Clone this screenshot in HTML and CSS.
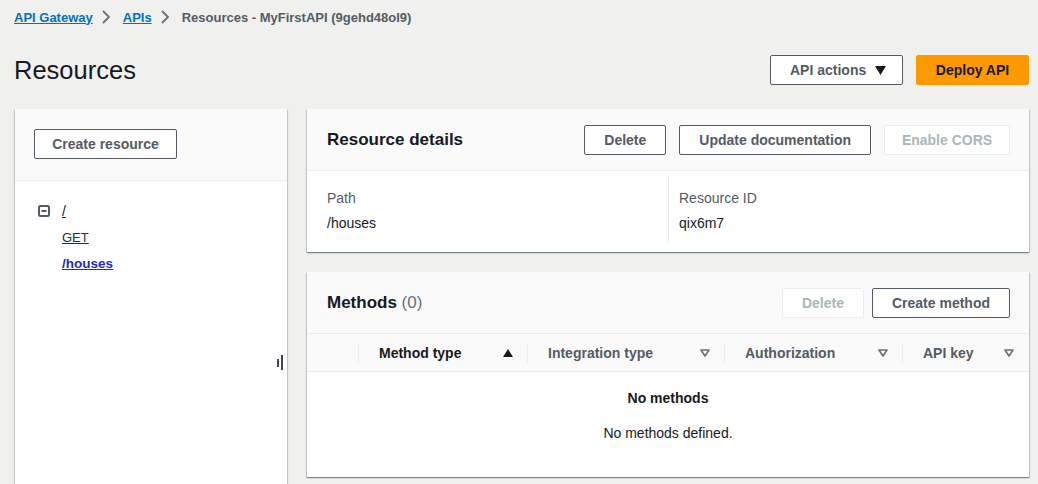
FILE: index.html
```html
<!DOCTYPE html>
<html lang="en">
<head>
<meta charset="utf-8">
<title>Resources - MyFirstAPI</title>
<link rel="stylesheet" href="styles.css">
</head>
<body>
<div class="page">
  <nav class="crumbs">
    <a class="crumb-link" href="#">API Gateway</a>
    <svg class="chev" width="16" height="16" viewBox="0 0 16 16"><path d="M5 2l6 6-6 6"/></svg>
    <a class="crumb-link" href="#">APIs</a>
    <svg class="chev" width="16" height="16" viewBox="0 0 16 16"><path d="M5 2l6 6-6 6"/></svg>
    <span class="crumb-current">Resources - MyFirstAPI (9gehd48ol9)</span>
  </nav>

  <header class="page-header">
    <h1 class="page-title">Resources</h1>
    <div class="header-actions">
      <button class="btn btn-actions">API actions
        <svg class="caret" width="11" height="9" viewBox="0 0 11 9"><path d="M0 0h11L5.5 9z"/></svg>
      </button>
      <button class="btn btn-primary">Deploy API</button>
    </div>
  </header>

  <div class="main">
    <aside class="side">
      <div class="side-head">
        <button class="btn btn-create">Create resource</button>
      </div>
      <ul class="tree">
        <li class="tree-row">
          <svg class="tree-toggle" width="12" height="12" viewBox="0 0 12 12"><rect x="1" y="1" width="10" height="10" rx="1.5"/><path d="M3.5 6h5"/></svg>
          <a class="tree-link" href="#">/</a>
        </li>
        <li class="tree-row tree-child"><a class="tree-link tree-method" href="#">GET</a></li>
        <li class="tree-row tree-child"><a class="tree-link tree-selected" href="#">/houses</a></li>
      </ul>
      <div class="resizer"><span class="bar-short"></span><span class="bar-long"></span></div>
    </aside>

    <div class="content">
      <section class="card">
        <div class="card-head">
          <h2 class="card-title">Resource details</h2>
          <div class="card-actions">
            <button class="btn">Delete</button>
            <button class="btn">Update documentation</button>
            <button class="btn btn-disabled btn-cors">Enable CORS</button>
          </div>
        </div>
        <div class="details">
          <div class="detail-col">
            <div class="detail-label">Path</div>
            <div class="detail-value">/houses</div>
          </div>
          <div class="detail-col detail-col-split">
            <div class="detail-label">Resource ID</div>
            <div class="detail-value">qix6m7</div>
          </div>
        </div>
      </section>

      <section class="card">
        <div class="card-head">
          <h2 class="card-title">Methods <span class="count">(0)</span></h2>
          <div class="card-actions card-actions-tight">
            <button class="btn btn-disabled">Delete</button>
            <button class="btn">Create method</button>
          </div>
        </div>
        <div class="table-head">
          <div class="th th-select"></div>
          <div class="th th-sorted"><span>Method type</span>
            <svg width="10" height="8" viewBox="0 0 10 8"><path class="tri-fill" d="M0 8L5 0l5 8z"/></svg>
          </div>
          <div class="th"><span>Integration type</span>
            <svg width="10" height="8" viewBox="0 0 10 8"><path class="tri-line" d="M1 1h8L5 7z"/></svg>
          </div>
          <div class="th"><span>Authorization</span>
            <svg width="10" height="8" viewBox="0 0 10 8"><path class="tri-line" d="M1 1h8L5 7z"/></svg>
          </div>
          <div class="th"><span>API key</span>
            <svg width="10" height="8" viewBox="0 0 10 8"><path class="tri-line" d="M1 1h8L5 7z"/></svg>
          </div>
        </div>
        <div class="empty">
          <div class="empty-title">No methods</div>
          <div class="empty-text">No methods defined.</div>
        </div>
      </section>
    </div>
  </div>
</div>
</body>
</html>
```
FILE: styles.css
```css
* { box-sizing: border-box; }

html, body {
  margin: 0;
  background: #f0f0ee;
  font-family: "Liberation Sans", Arial, sans-serif;
  color: #16191f;
  font-size: 14px;
  overflow: hidden;
}

.page {
  padding: 8px 9px 0 15px;
}

/* breadcrumbs */
.crumbs {
  display: flex;
  align-items: center;
  height: 18px;
  margin-left: -1px;
  font-size: 13px;
  font-weight: bold;
}
.crumb-link {
  color: #0073bb;
  text-decoration: underline;
}
.crumb-current {
  color: #545b64;
}
.chev {
  margin: 0 9px 0 5px;
  fill: none;
  stroke: #687078;
  stroke-width: 1.8;
}

/* page header */
.page-header {
  display: flex;
  align-items: center;
  justify-content: space-between;
  height: 30px;
  margin-top: 29px;
}
.page-title {
  margin: 0 0 0 -1px;
  font-size: 25.5px;
  font-weight: normal;
  line-height: 30px;
  color: #16191f;
}
.header-actions {
  display: flex;
  gap: 13px;
}

/* buttons */
.btn {
  height: 30px;
  padding: 0 19px;
  border: 1px solid #545b64;
  border-radius: 2px;
  background: #fff;
  color: #545b64;
  font-family: "Liberation Sans", Arial, sans-serif;
  font-weight: bold;
  font-size: 14px;
  white-space: nowrap;
  display: inline-flex;
  align-items: center;
  justify-content: center;
}
.btn-actions {
  padding: 0 16px 0 19px;
  width: 133px;
  justify-content: space-between;
}
.btn-create { width: 143px; padding: 0; }
.btn-cors { width: 126px; padding: 0; }
.caret { fill: #16191f; }
.btn-primary {
  width: 113px;
  background: #ff9900;
  border-color: #ff9900;
  color: #16191f;
}
.btn-disabled {
  border-color: #eaeded;
  color: #aab7b8;
}

/* layout */
.main {
  display: grid;
  grid-template-columns: 272px 1fr;
  gap: 20px;
  margin-top: 24px;
}

/* side panel */
.side {
  position: relative;
  background: #fff;
  min-height: 380px;
  box-shadow: 0 1px 1px 0 rgba(0, 28, 36, 0.3), 1px 1px 1px 0 rgba(0, 28, 36, 0.15), -1px 1px 1px 0 rgba(0, 28, 36, 0.15);
}
.side-head {
  background: #fafafa;
  padding: 20px 19px 21px 19px;
  border-bottom: 1px solid #eaeded;
}
.tree {
  list-style: none;
  margin: 0;
  padding: 17px 0 0 23px;
}
.tree-row {
  display: flex;
  align-items: center;
  height: 26px;
}
.tree-child { padding-left: 24px; }
.tree-toggle {
  margin-right: 12px;
  fill: none;
  stroke: #545b64;
  stroke-width: 2;
}
.tree-link {
  color: #16191f;
  text-decoration: underline;
  font-size: 14px;
}
.tree-method { font-size: 13px; color: #232f3e; }
.tree-selected {
  color: #1b2bd0;
  font-weight: bold;
  font-size: 13.5px;
}
.resizer {
  position: absolute;
  top: 246px;
  right: 4px;
  display: flex;
  align-items: center;
  gap: 2px;
}
.resizer span {
  display: block;
  width: 2px;
  background: #414750;
}
.bar-short { height: 8px; }
.bar-long { height: 15px; }

/* cards */
.content {
  display: flex;
  flex-direction: column;
  gap: 20px;
}
.card {
  background: #fff;
  box-shadow: 0 1px 1px 0 rgba(0, 28, 36, 0.3), 1px 1px 1px 0 rgba(0, 28, 36, 0.15), -1px 1px 1px 0 rgba(0, 28, 36, 0.15);
}
.card-head {
  display: flex;
  align-items: center;
  justify-content: space-between;
  height: 62px;
  padding: 0 19px 0 20px;
  background: #fafafa;
  border-bottom: 1px solid #eaeded;
}
.card-title {
  margin: 0;
  font-size: 17px;
  font-weight: bold;
  color: #16191f;
}
.count {
  font-weight: normal;
  color: #687078;
}
.card-actions {
  display: flex;
  gap: 13px;
}
.card-actions-tight { gap: 8px; }

.details {
  display: grid;
  grid-template-columns: 1fr 1fr;
  padding: 6px 20px 10px;
}
.detail-col {
  padding: 11px 0 9px;
}
.detail-col-split {
  border-left: 1px solid #eaeded;
  padding-left: 10px;
}
.detail-label {
  line-height: 20px;
  color: #545b64;
}
.detail-value {
  margin-top: 5px;
  line-height: 20px;
  color: #16191f;
}

/* table */
.table-head {
  display: grid;
  grid-template-columns: 52px 169px 197px 178px 1fr;
  height: 38px;
  background: #fafafa;
  border-bottom: 1px solid #eaeded;
}
.th {
  position: relative;
  display: flex;
  align-items: center;
  justify-content: space-between;
  padding: 0 15px 0 20px;
  font-weight: bold;
  color: #545b64;
}
.th::after {
  content: "";
  position: absolute;
  right: 0;
  top: 10px;
  height: 19px;
  border-right: 1px solid #eaeded;
}
.th:last-child::after { display: none; }
.th-sorted { color: #16191f; }
.tri-fill { fill: #16191f; }
.tri-line {
  fill: none;
  stroke: #687078;
  stroke-width: 1.6;
  stroke-linejoin: round;
}

.empty {
  text-align: center;
  padding: 16px 0 34px;
}
.empty-title {
  font-weight: bold;
  line-height: 20px;
  color: #16191f;
}
.empty-text {
  margin-top: 15px;
  line-height: 20px;
  color: #16191f;
}
```
